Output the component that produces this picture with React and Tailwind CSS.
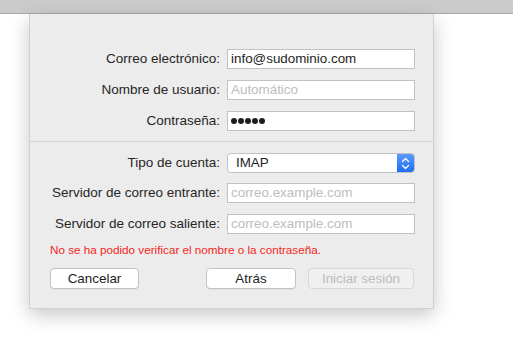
import React from 'react';

const font = { fontFamily: '"Liberation Sans", Arial, sans-serif' };

const Field = ({ label, children }) => (
  <div className="flex items-center h-[20px]">
    <label className="w-[191px] text-right pr-[1px] text-[13.5px] text-[#262626] whitespace-nowrap">{label}</label>
    <div className="ml-[6px] w-[188px] h-[20px]">{children}</div>
  </div>
);

const TextBox = ({ value, placeholder }) => (
  <div className="h-full border border-[#c2c2c2] bg-white px-[3px] flex items-center text-[13.4px] leading-none">
    {value ? <span className="text-[#1e1e1e]">{value}</span> : <span className="text-[#bdbdbd]">{placeholder}</span>}
  </div>
);

export default function App() {
  return (
    <div className="min-h-[351px] bg-white" style={font}>
      <div className="h-[14px] bg-[#cbcbcb] border-b border-[#a9a9a9]"></div>
      <div className="ml-[29px] w-[405px] bg-[#ececec] border-x border-b border-[#d0d0d0] shadow-[0_6px_18px_rgba(0,0,0,0.22)] pt-[35px] pb-[19px]">
        <div className="flex flex-col gap-[11px]">
          <Field label="Correo electrónico:"><TextBox value="info@sudominio.com" /></Field>
          <Field label="Nombre de usuario:"><TextBox placeholder="Automático" /></Field>
          <Field label="Contraseña:">
            <div className="h-full border border-[#c2c2c2] bg-white px-[3px] flex items-center gap-[1px]">
              {[0, 1, 2, 3, 4].map(i => (
                <span key={i} className="w-[6px] h-[6px] rounded-full bg-[#1e1e1e]"></span>
              ))}
            </div>
          </Field>
        </div>
        <div className="h-px bg-[#d6d6d6] mt-[10px] mb-[11px]"></div>
        <div className="flex flex-col gap-[10px]">
          <Field label="Tipo de cuenta:">
            <div className="h-full flex rounded-[4px] border border-[#c2c2c2] bg-white overflow-hidden">
              <span className="flex-1 pl-[8px] flex items-center text-[13.4px] text-[#1e1e1e]">IMAP</span>
              <span className="w-[17px] bg-gradient-to-b from-[#5a9bf8] to-[#1d6ef5] flex items-center justify-center">
                <svg width="9" height="13" viewBox="0 0 9 13" fill="none" stroke="white" strokeWidth="1.3" strokeLinecap="round" strokeLinejoin="round">
                  <path d="M1.5 4.5 L4.5 1.5 L7.5 4.5" />
                  <path d="M1.5 8.5 L4.5 11.5 L7.5 8.5" />
                </svg>
              </span>
            </div>
          </Field>
          <div className="flex flex-col gap-[11px]">
            <Field label="Servidor de correo entrante:"><TextBox placeholder="correo.example.com" /></Field>
            <Field label="Servidor de correo saliente:"><TextBox placeholder="correo.example.com" /></Field>
          </div>
        </div>
        <p className="mt-[8px] ml-[20px] text-[11.7px] leading-[16px] text-[#f4261c] whitespace-nowrap">No se ha podido verificar el nombre o la contraseña.</p>
        <div className="mt-[10px] flex items-center">
          <button className="ml-[20px] w-[89px] h-[21px] rounded-[4px] border border-[#c3c3c3] bg-white text-[13.4px] text-[#1e1e1e] shadow-[0_1px_0_rgba(0,0,0,0.05)]">Cancelar</button>
          <button className="ml-[67px] w-[90px] h-[21px] rounded-[4px] border border-[#c3c3c3] bg-white text-[13.4px] text-[#1e1e1e] shadow-[0_1px_0_rgba(0,0,0,0.05)]">Atrás</button>
          <button className="ml-[12px] w-[106px] h-[21px] rounded-[4px] border border-[#d8d8d8] bg-[#f0f0f0] text-[13.4px] text-[#bcbcbc]">Iniciar sesión</button>
        </div>
      </div>
    </div>
  );
}
